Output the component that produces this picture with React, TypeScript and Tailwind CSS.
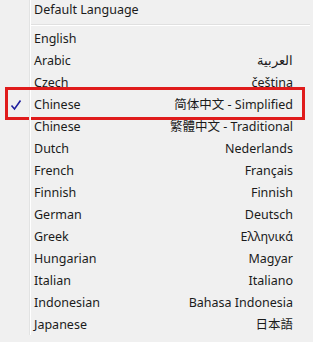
const languages: [string, string][] = [
  ['English', ''],
  ['Arabic', 'العربية'],
  ['Czech', 'čeština'],
  ['Chinese', '简体中文 - Simplified'],
  ['Chinese', '繁體中文 - Traditional'],
  ['Dutch', 'Nederlands'],
  ['French', 'Français'],
  ['Finnish', 'Finnish'],
  ['German', 'Deutsch'],
  ['Greek', 'Ελληνικά'],
  ['Hungarian', 'Magyar'],
  ['Italian', 'Italiano'],
  ['Indonesian', 'Bahasa Indonesia'],
  ['Japanese', '日本語'],
];

function Gutter({ children }: { children?: React.ReactNode }) {
  return (
    <div className="w-[30px] shrink-0 self-stretch flex items-center justify-center border-r border-[#e2e3e3] shadow-[1px_0_0_#ffffff]">
      {children}
    </div>
  );
}

function Check() {
  return (
    <svg width="12" height="12" viewBox="0 0 12 12" className="ml-[2px] mt-[1px]">
      <path d="M1.5 6.5 L4.5 10 L10.5 1.5" fill="none" stroke="#1f1f9e" strokeWidth="1.6" />
    </svg>
  );
}

export default function App() {
  return (
    <div
      className="w-[313px] h-[342px] overflow-hidden bg-[#f0f0f0] text-[12.5px] text-[#1b1b1b] flex flex-col"
      style={{ fontFamily: '"Noto Sans", "Noto Sans CJK SC", sans-serif' }}
    >
      <div className="flex h-[19px]">
        <Gutter />
        <div className="pl-[4px] pt-px flex items-center">Default Language</div>
      </div>
      <div className="flex h-[8px]">
        <Gutter />
        <div className="flex-1 flex flex-col pt-[5px] pl-[1px] pr-[3px]">
          <div className="h-px bg-[#e0e0e0]" />
          <div className="h-px bg-white" />
        </div>
      </div>
      {languages.map(([name, native], i) => {
        const selected = i === 3;
        return (
          <div key={i} className="relative flex h-[22px]">
            <Gutter>{selected && <Check />}</Gutter>
            <div className="flex-1 flex items-center justify-between pl-[4px] pr-[20px] pt-[2px]">
              <span>{name}</span>
              <span>{native}</span>
            </div>
            {selected && (
              <div className="absolute left-[5px] right-[8px] -top-[6px] -bottom-[5px] border-[3px] border-[#e01b1b]" />
            )}
          </div>
        );
      })}
    </div>
  );
}
